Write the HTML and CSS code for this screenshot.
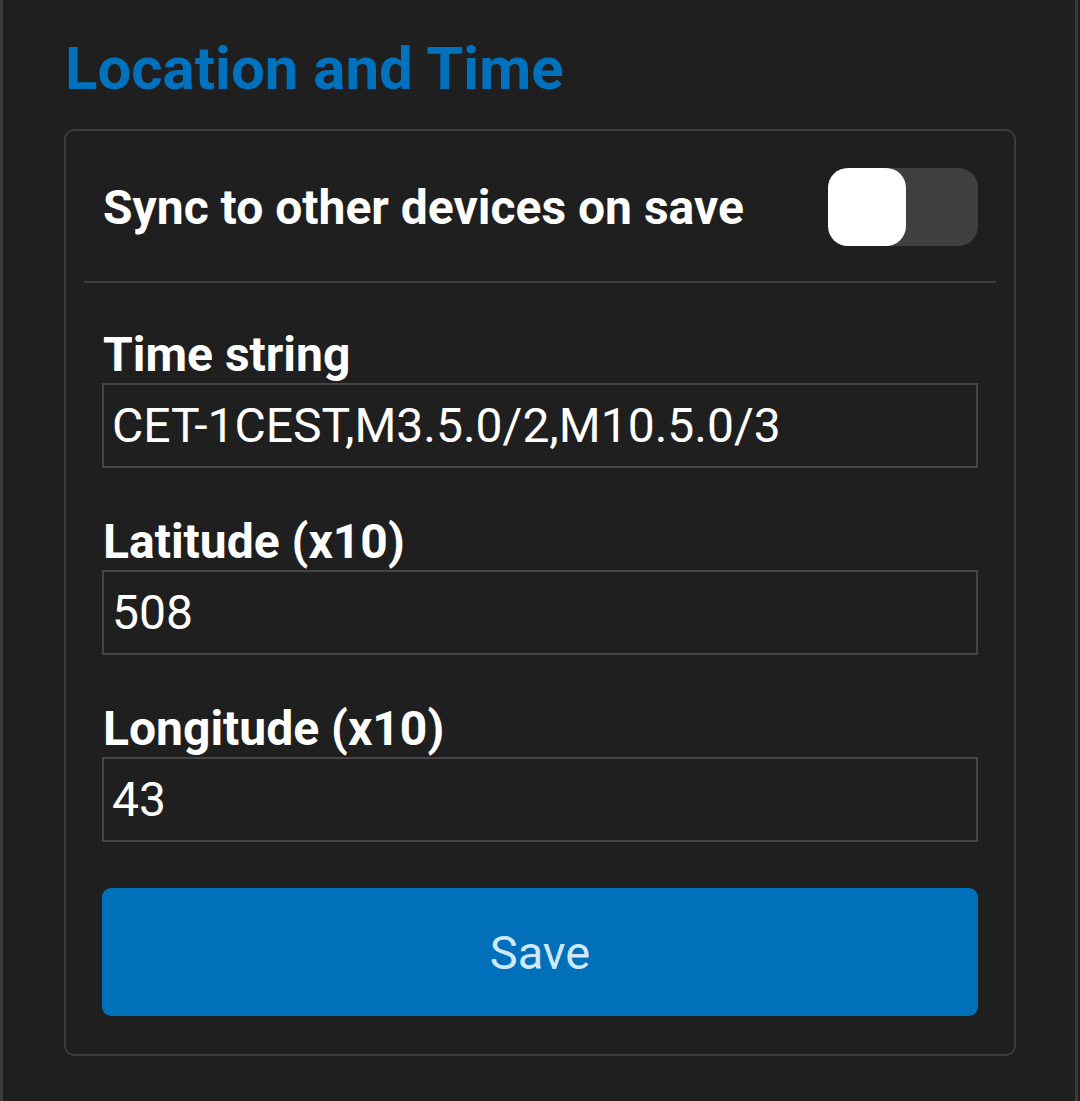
FILE: index.html
```html
<!DOCTYPE html>
<html lang="en">
<head>
<meta charset="utf-8">
<title>Location and Time</title>
<link rel="stylesheet" href="styles.css">
</head>
<body>
<div class="page">
  <h1 class="title">Location and Time</h1>
  <div class="card">
    <div class="sync-row">
      <span class="sync-label">Sync to other devices on save</span>
      <div class="toggle"><div class="knob"></div></div>
    </div>
    <div class="divider"></div>
    <div class="fields">
      <div class="field">
        <label class="label">Time string</label>
        <div class="input">CET-1CEST,M3.5.0/2,M10.5.0/3</div>
      </div>
      <div class="field">
        <label class="label">Latitude (x10)</label>
        <div class="input">508</div>
      </div>
      <div class="field">
        <label class="label">Longitude (x10)</label>
        <div class="input">43</div>
      </div>
      <button class="save">Save</button>
    </div>
  </div>
</div>
</body>
</html>
```

FILE: styles.css
```css
html, body {
  margin: 0;
  padding: 0;
  background: #1f1f1f;
  font-family: Roboto, "Liberation Sans", sans-serif;
}
.page {
  width: 1078px;
  min-height: 1101px;
  box-sizing: border-box;
  border-left: 3px solid #3a3a3a;
  border-right: 3px solid #3a3a3a;
  padding: 40px 59px 0 61px;
}
.title {
  margin: 0 0 0 1px;
  font-size: 60px;
  line-height: 58px;
  font-weight: 700;
  color: #0071bc;
}
.card {
  margin-top: 31px;
  border: 2px solid #3c3c3c;
  border-radius: 10px;
  background: #1f1f1f;
}
.sync-row {
  display: flex;
  align-items: center;
  justify-content: space-between;
  padding: 37px 36px 0 37px;
}
.sync-label {
  color: #ffffff;
  font-size: 48px;
  font-weight: 700;
}
.toggle {
  width: 150px;
  height: 78px;
  border-radius: 20px;
  background: #404040;
}
.knob {
  width: 78px;
  height: 78px;
  border-radius: 20px;
  background: #ffffff;
}
.divider {
  height: 2px;
  margin: 35px 18px 0 18px;
  background: #3c3c3c;
}
.fields {
  padding: 0 36px 38px 36px;
  display: flex;
  flex-direction: column;
}
.field {
  margin-top: 48px;
  display: flex;
  flex-direction: column;
}
.field:first-child {
  margin-top: 46px;
}
.label {
  color: #ffffff;
  font-size: 48px;
  font-weight: 700;
  line-height: 52px;
  height: 52px;
  margin-left: 1px;
}
.input {
  margin-top: 2px;
  height: 85px;
  box-sizing: border-box;
  border: 2px solid #454545;
  display: flex;
  align-items: center;
  padding-left: 8px;
  color: #ffffff;
  font-size: 48px;
  font-weight: 400;
}
.save {
  margin-top: 46px;
  height: 128px;
  border: none;
  border-radius: 9px;
  background: #0070bb;
  color: #cfe9fb;
  font-family: Roboto, "Liberation Sans", sans-serif;
  font-size: 47px;
  font-weight: 400;
  cursor: pointer;
}
```
